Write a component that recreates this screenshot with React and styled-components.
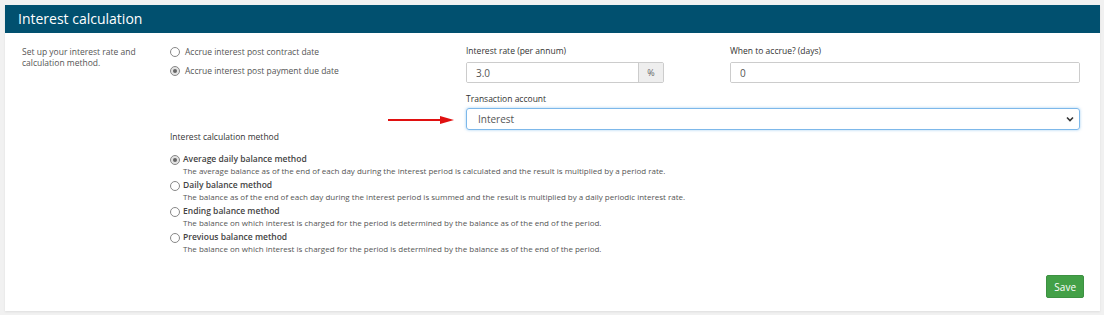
import React, { useState } from 'react';
import styled, { createGlobalStyle } from 'styled-components';

const GlobalStyle = createGlobalStyle`
  body {
    margin: 0;
    background: #f1f1f1;
    font-family: "Open Sans", "Liberation Sans", sans-serif;
    color: #555;
  }
`;

const Page = styled.div`
  padding: 5px 4px 4px 5px;
  height: 315px;
  box-sizing: border-box;
`;

const Panel = styled.section`
  background: #fff;
  height: 306px;
  display: flex;
  flex-direction: column;
  box-shadow: 0 1px 2px rgba(0, 0, 0, 0.08);
`;

const Header = styled.h2`
  margin: 0;
  height: 28px;
  background: #01506f;
  color: #fff;
  font-size: 14px;
  font-weight: 400;
  line-height: 28px;
  padding-left: 13px;
`;

const Body = styled.div`
  flex: 1;
  display: grid;
  grid-template-columns: 148px 1fr;
  padding: 12px 20px 0 17px;
`;

const Intro = styled.p`
  margin: 0;
  font-size: 8.5px;
  line-height: 11px;
  padding-top: 1px;
  color: #555;
  width: 120px;
`;

const Main = styled.div`
  display: grid;
  grid-template-columns: 296px 198px 66px 350px;
  align-content: start;
`;

const RadioStack = styled.div`
  display: flex;
  flex-direction: column;
  gap: 8px;
  padding-top: 1px;
`;

const Field = styled.div`
  grid-column: ${(p) => p.$col};
  display: flex;
  flex-direction: column;
  gap: ${(p) => p.$gap || 4}px;
  margin-top: ${(p) => p.$top || 0}px;
`;

const Label = styled.label`
  font-size: 8.5px;
  color: #333;
  line-height: 11px;
`;

const InputGroup = styled.div`
  display: flex;
  height: 21px;
  border: 1px solid #ccc;
  border-radius: 2px;
  box-sizing: border-box;
  overflow: hidden;
`;

const TextInput = styled.input`
  flex: 1;
  min-width: 0;
  border: none;
  outline: none;
  padding: 0 9px;
  font-family: inherit;
  font-size: 10px;
  color: #555;
`;

const Addon = styled.span`
  width: 24px;
  background: #eee;
  border-left: 1px solid #ccc;
  display: flex;
  align-items: center;
  justify-content: center;
  font-size: 9px;
  color: #666;
`;

const SelectBox = styled.div`
  height: 22px;
  border: 1px solid #7db8ea;
  border-radius: 3px;
  box-shadow: 0 0 3px rgba(102, 175, 233, 0.6);
  display: flex;
  align-items: center;
  justify-content: space-between;
  padding: 0 4px 0 11px;
  box-sizing: border-box;
  font-size: 10px;
  color: #555;
`;

const ArrowCell = styled.div`
  grid-column: 1;
  display: flex;
  justify-content: flex-end;
  align-items: flex-end;
  padding: 0 12px 6px 0;
`;

const SectionLabel = styled.div`
  grid-column: 1 / -1;
  font-size: 8.5px;
  color: #333;
  margin-top: 1px;
  line-height: 11px;
`;

const Methods = styled.div`
  grid-column: 1 / -1;
  display: flex;
  flex-direction: column;
  gap: 3px;
  margin-top: 11px;
`;

const Option = styled.label`
  display: grid;
  grid-template-columns: 13px 1fr;
  column-gap: ${(p) => (p.$inline ? 2 : 0)}px;
  align-items: start;
  cursor: pointer;
`;

const Dot = styled.span`
  width: 8px;
  height: 8px;
  border-radius: 50%;
  border: 1px solid #888;
  background: ${(p) => (p.$on ? '#e2e2e2' : '#fff')};
  margin-top: ${(p) => p.$top || 1}px;
  display: flex;
  align-items: center;
  justify-content: center;
  &::after {
    content: '';
    width: 4px;
    height: 4px;
    border-radius: 50%;
    background: ${(p) => (p.$on ? '#666' : 'transparent')};
  }
`;

const OptionText = styled.span`
  font-size: 8.5px;
  line-height: 11px;
  color: ${(p) => (p.$title ? '#444' : '#555')};
  font-weight: ${(p) => (p.$title ? 600 : 400)};
`;

const Desc = styled.div`
  grid-column: 2;
  font-size: 8px;
  line-height: 11px;
  color: #555;
`;

const Footer = styled.div`
  display: flex;
  justify-content: flex-end;
  padding: 0 16px 13px 0;
`;

const SaveButton = styled.button`
  background: #43a047;
  color: #fff;
  border: 1px solid #3d9142;
  border-radius: 2px;
  font-family: inherit;
  font-size: 10px;
  height: 23px;
  padding: 0 7px;
  cursor: pointer;
`;

const methods = [
  {
    id: 'avg',
    title: 'Average daily balance method',
    desc: 'The average balance as of the end of each day during the interest period is calculated and the result is multiplied by a period rate.',
  },
  {
    id: 'daily',
    title: 'Daily balance method',
    desc: 'The balance as of the end of each day during the interest period is summed and the result is multiplied by a daily periodic interest rate.',
  },
  {
    id: 'ending',
    title: 'Ending balance method',
    desc: 'The balance on which interest is charged for the period is determined by the balance as of the end of the period.',
  },
  {
    id: 'previous',
    title: 'Previous balance method',
    desc: 'The balance on which interest is charged for the period is determined by the balance as of the end of the period.',
  },
];

const App = () => {
  const [accrue, setAccrue] = useState('payment');
  const [method, setMethod] = useState('avg');

  return (
    <Page>
      <GlobalStyle />
      <Panel>
        <Header>Interest calculation</Header>
        <Body>
          <Intro>Set up your interest rate and calculation method.</Intro>
          <Main>
            <RadioStack>
              <Option $inline onClick={() => setAccrue('contract')}>
                <Dot $on={accrue === 'contract'} />
                <OptionText>Accrue interest post contract date</OptionText>
              </Option>
              <Option $inline onClick={() => setAccrue('payment')}>
                <Dot $on={accrue === 'payment'} />
                <OptionText>Accrue interest post payment due date</OptionText>
              </Option>
            </RadioStack>
            <Field $col="2" $gap={6}>
              <Label>Interest rate (per annum)</Label>
              <InputGroup>
                <TextInput defaultValue="3.0" />
                <Addon>%</Addon>
              </InputGroup>
            </Field>
            <Field $col="4" $gap={6}>
              <Label>When to accrue? (days)</Label>
              <InputGroup>
                <TextInput defaultValue="0" />
              </InputGroup>
            </Field>

            <ArrowCell>
              <svg width="66" height="8" viewBox="0 0 66 8">
                <line x1="0" y1="4" x2="54" y2="4" stroke="#e01010" strokeWidth="2" />
                <path d="M52 0 L66 4 L52 8 Z" fill="#e01010" />
              </svg>
            </ArrowCell>
            <Field $col="2 / -1" $top={10}>
              <Label>Transaction account</Label>
              <SelectBox>
                <span>Interest</span>
                <svg width="10" height="10" viewBox="0 0 10 10">
                  <path d="M2 3.5 L5 6.5 L8 3.5" fill="none" stroke="#333" strokeWidth="1.6" />
                </svg>
              </SelectBox>
            </Field>

            <SectionLabel>Interest calculation method</SectionLabel>
            <Methods>
              {methods.map((m) => (
                <Option key={m.id} onClick={() => setMethod(m.id)}>
                  <Dot $on={method === m.id} $top={2} />
                  <OptionText $title>{m.title}</OptionText>
                  <Desc>{m.desc}</Desc>
                </Option>
              ))}
            </Methods>
          </Main>
        </Body>
        <Footer>
          <SaveButton>Save</SaveButton>
        </Footer>
      </Panel>
    </Page>
  );
};

export default App;
